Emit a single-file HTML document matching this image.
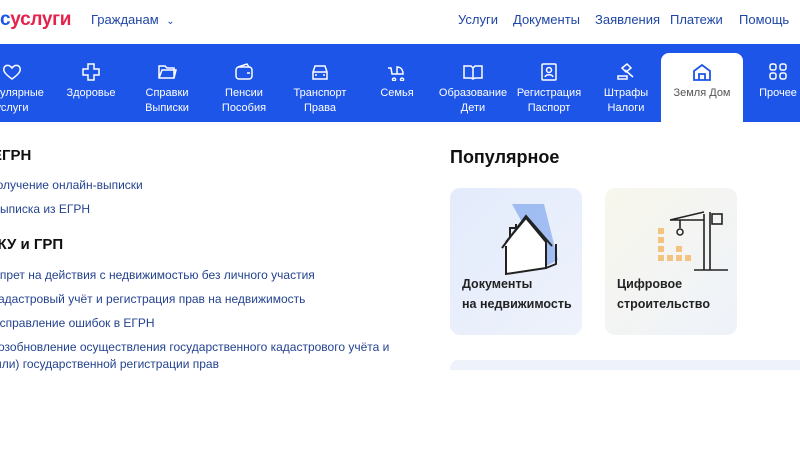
<!DOCTYPE html>
<html><head><meta charset="utf-8"><style>
*{margin:0;padding:0;box-sizing:border-box}
body{width:800px;height:459px;overflow:hidden;background:#fff;font-family:"Liberation Sans",sans-serif;position:relative}
.a{position:absolute;white-space:nowrap}
.nav{color:#1e46a6;font-size:13px;top:12px}
.bar{position:absolute;left:0;top:44px;width:800px;height:78px;background:#1d55e8}
.tab{position:absolute;top:0;width:80px;text-align:center;color:#fff;font-size:11px;line-height:15px}
.tab svg{display:block;margin:19px auto 5px;}
.act{position:absolute;left:661px;top:9px;width:82px;height:69px;background:#fff;border-radius:8px 8px 0 0}
.h{font-size:15px;font-weight:bold;color:#111}
.l{font-size:12px;color:#24438f}
.card{position:absolute;top:188px;width:132px;height:147px;border-radius:10px;background:linear-gradient(135deg,#e3ebfb,#eef2fb)}
.ct{position:absolute;left:12px;top:86px;font-size:12.5px;line-height:20px;font-weight:bold;color:#222}
</style></head><body>
<div class="a" style="left:0;top:9px;font-size:19px;font-weight:bold;letter-spacing:-0.3px"><span style="color:#1d55e8">с</span><span style="color:#e4224b">услуги</span></div>
<div class="a" style="left:91px;top:12px;font-size:13px;color:#1e46a6">Гражданам <span style="font-size:10px;margin-left:4px">&#8964;</span></div>
<div class="a nav" style="left:458px">Услуги</div>
<div class="a nav" style="left:513px">Документы</div>
<div class="a nav" style="left:595px">Заявления</div>
<div class="a nav" style="left:670px">Платежи</div>
<div class="a nav" style="left:739px">Помощь</div>
<div class="bar">
<div class="act"></div>
<div class="tab" style="left:-28px"><svg width="20" height="18" viewBox="0 0 20 18"><path d="M10 16C3 11 1 8 2 5s5-4 8 0c3-4 7-3 8 0s-1 6-8 11z" fill="none" stroke="#fff" stroke-width="1.5"/></svg>Популярные<br>услуги</div>
<div class="tab" style="left:51px"><svg width="20" height="18" viewBox="0 0 20 18"><path d="M7 1h6v5h5v6h-5v5H7v-5H2V6h5z" fill="none" stroke="#fff" stroke-width="1.5"/></svg>Здоровье</div>
<div class="tab" style="left:127px"><svg width="20" height="18" viewBox="0 0 20 18"><path d="M2 3h6l2 2h7v10H2zM2 15l3-8h14l-2 8" fill="none" stroke="#fff" stroke-width="1.5"/></svg>Справки<br>Выписки</div>
<div class="tab" style="left:204px"><svg width="20" height="18" viewBox="0 0 20 18"><rect x="2" y="4" width="16" height="12" rx="3" fill="none" stroke="#fff" stroke-width="1.5"/><path d="M4 4l9-3 2 3M13 10h3" stroke="#fff" stroke-width="1.5" fill="none"/></svg>Пенсии<br>Пособия</div>
<div class="tab" style="left:280px"><svg width="20" height="18" viewBox="0 0 20 18"><path d="M3 9l2-6h10l2 6v7H3zM3 9h14M5 12h2M13 12h2" fill="none" stroke="#fff" stroke-width="1.5"/></svg>Транспорт<br>Права</div>
<div class="tab" style="left:357px"><svg width="20" height="18" viewBox="0 0 20 18"><path d="M1 5h3l1 6h11c0-4-2-7-6-7v7M7 15a1.5 1.5 0 1 0 .1 0M15 15a1.5 1.5 0 1 0 .1 0" fill="none" stroke="#fff" stroke-width="1.5"/></svg>Семья</div>
<div class="tab" style="left:433px"><svg width="20" height="18" viewBox="0 0 20 18"><path d="M1 3h7l2 2 2-2h7v12h-7l-2 1-2-1H1zM10 5v11" fill="none" stroke="#fff" stroke-width="1.5"/></svg>Образование<br>Дети</div>
<div class="tab" style="left:509px"><svg width="20" height="18" viewBox="0 0 20 18"><rect x="3" y="1" width="14" height="16" rx="1" fill="none" stroke="#fff" stroke-width="1.5"/><circle cx="10" cy="7" r="2.5" fill="none" stroke="#fff" stroke-width="1.5"/><path d="M6 14c1-3 7-3 8 0" fill="none" stroke="#fff" stroke-width="1.5"/></svg>Регистрация<br>Паспорт</div>
<div class="tab" style="left:586px"><svg width="20" height="18" viewBox="0 0 20 18"><path d="M6 5l5-4 4 4-5 4zM9 7l8 7M2 16h9v-3H2z" fill="none" stroke="#fff" stroke-width="1.5"/></svg>Штрафы<br>Налоги</div>
<div class="tab" style="left:662px;color:#555"><svg width="20" height="18" viewBox="0 0 20 18"><path d="M2 8l8-6 8 6v9H2zM7 17v-6h6v6" fill="none" stroke="#1d55e8" stroke-width="1.8"/></svg>Земля Дом</div>
<div class="tab" style="left:738px"><svg width="20" height="18" viewBox="0 0 20 18"><rect x="2" y="1" width="6" height="6" rx="2" fill="none" stroke="#fff" stroke-width="1.5"/><rect x="12" y="1" width="6" height="6" rx="2" fill="none" stroke="#fff" stroke-width="1.5"/><rect x="2" y="10" width="6" height="6" rx="2" fill="none" stroke="#fff" stroke-width="1.5"/><rect x="12" y="10" width="6" height="6" rx="2" fill="none" stroke="#fff" stroke-width="1.5"/></svg>Прочее</div>
</div>
<div class="a h" style="left:-8px;top:147px">ЕГРН</div>
<div class="a l" style="left:-12px;top:178px">Получение онлайн-выписки</div>
<div class="a l" style="left:-8px;top:202px">Выписка из ЕГРН</div>
<div class="a h" style="left:-11px;top:236px">ГКУ и ГРП</div>
<div class="a l" style="left:-14px;top:268px">Запрет на действия с недвижимостью без личного участия</div>
<div class="a l" style="left:-9px;top:292px">Кадастровый учёт и регистрация прав на недвижимость</div>
<div class="a l" style="left:-9px;top:316px">Исправление ошибок в ЕГРН</div>
<div class="a l" style="left:-10px;top:340px">Возобновление осуществления государственного кадастрового учёта и</div>
<div class="a l" style="left:-9px;top:357px">(или) государственной регистрации прав</div>
<div class="a" style="left:450px;top:147px;font-size:18px;font-weight:bold;color:#111">Популярное</div>
<div class="card" style="left:450px">
<svg style="position:absolute;left:50px;top:14px" width="64" height="74" viewBox="0 0 64 74"><path d="M12 2l32 0 14 56-12 6z" fill="#8fb0f0" opacity=".8"/><path d="M6 44v28l40-6V40L26 16 6 40" fill="#fff" stroke="#222" stroke-width="2"/><path d="M10 36V26h6v-4M2 46l24-32 26 30M46 66l10-4V42" fill="none" stroke="#222" stroke-width="2"/></svg>
<div class="ct">Документы<br>на недвижимость</div></div>
<div class="card" style="left:605px;background:linear-gradient(135deg,#f8f7ec,#eef2fa)">
<svg style="position:absolute;left:45px;top:22px" width="80" height="62" viewBox="0 0 80 62"><g fill="#f2c47f"><rect x="8" y="18" width="6" height="6"/><rect x="8" y="27" width="6" height="6"/><rect x="8" y="36" width="6" height="6"/><rect x="8" y="45" width="6" height="6"/><rect x="17" y="45" width="6" height="6"/><rect x="26" y="36" width="6" height="6"/><rect x="26" y="45" width="6" height="6"/><rect x="35" y="45" width="6" height="6"/></g><path d="M20 10h34M54 4v56M60 2v58M44 60h34M30 10v8M20 10l34-8" fill="none" stroke="#222" stroke-width="1.6"/><rect x="62" y="4" width="10" height="10" fill="none" stroke="#222" stroke-width="1.6"/><circle cx="30" cy="22" r="3" fill="none" stroke="#222" stroke-width="1.5"/></svg>
<div class="ct">Цифровое<br>строительство</div></div>
<div style="position:absolute;left:450px;top:360px;width:360px;height:10px;background:#eef3fb;border-radius:8px 0 0 0"></div>
</body></html>
